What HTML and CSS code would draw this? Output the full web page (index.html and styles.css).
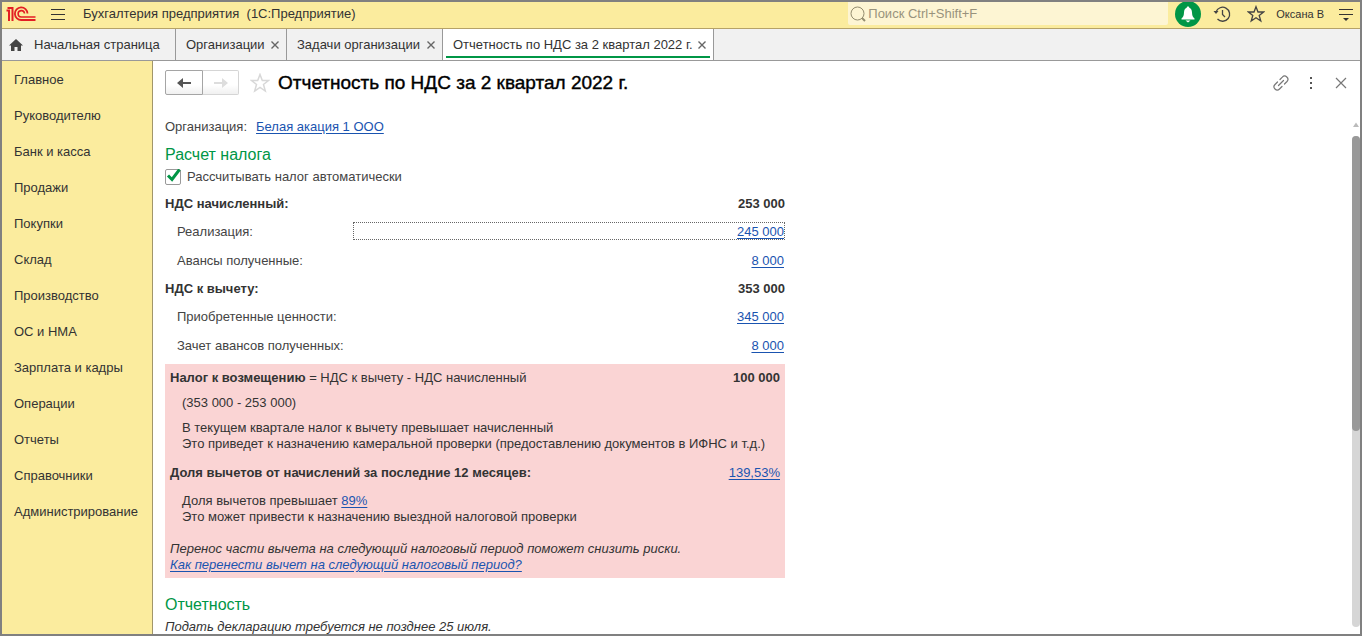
FILE: index.html
```html
<!DOCTYPE html>
<html lang="ru">
<head>
<meta charset="utf-8">
<title>Бухгалтерия предприятия (1С:Предприятие)</title>
<link rel="stylesheet" href="styles.css">
</head>
<body class="app">
<header class="topbar">
  <svg class="logo" width="30" height="16" viewBox="0 0 30 16" fill="none" stroke="#e31e24" stroke-width="2" aria-label="1С" role="img">
    <path d="M0.500 4.500H3V15"/>
    <path d="M1.500 2H6.500V15"/>
    <path d="M21.500 7.500A6.300 6.300 0 1 0 15.500 14H29.500" stroke-width="1.800"/>
    <path d="M18.500 7.500A3.200 3.200 0 1 0 15.500 11H29.500" stroke-width="1.600"/>
  </svg>
  <button class="icon-button menu-button" aria-label="Меню">
    <svg width="16" height="14" viewBox="0 0 16 14" stroke="#333" stroke-width="1"><path d="M1 2.500H15M1 7.500H15M1 12.500H15"/></svg>
  </button>
  <span class="app-title">Бухгалтерия предприятия&nbsp; (1С:Предприятие)</span>
  <label class="search">
    <svg width="17" height="16" viewBox="0 0 17 16" fill="none" stroke="#948d70"><circle cx="7.500" cy="7.500" r="6.500"/><path d="M12 12L15 15" stroke-width="2"/></svg>
    <input class="search-input" type="text" placeholder="Поиск Ctrl+Shift+F" aria-label="Поиск">
  </label>
  <div class="top-tools">
    <button class="icon-button bell" aria-label="Уведомления">
      <svg width="26" height="26" viewBox="0 0 26 26"><circle cx="13" cy="13" r="13" fill="#009646"/><path d="M13 5.500C13.800 5.500 14.300 6 14.300 6.700C16.300 7.300 16.800 9 17 11.500C17.200 14.500 17.500 15.500 19.500 17.500V18.500H6.500V17.500C8.500 15.500 8.800 14.500 9 11.500C9.200 9 9.700 7.300 11.700 6.700C11.700 6 12.200 5.500 13 5.500ZM10.500 19.500H15.500L13 21.500Z" fill="#fff"/></svg>
    </button>
    <button class="icon-button" aria-label="История">
      <svg width="18" height="18" viewBox="0 0 18 18" fill="none" stroke="#444" stroke-width="1.300"><path d="M3 7A7 7 0 1 1 4.500 14M9.500 5V9.500L12 12"/><path d="M0.500 6H5.500L3 9Z" fill="#444" stroke="none"/></svg>
    </button>
    <button class="icon-button" aria-label="Избранное">
      <svg width="18" height="18" viewBox="0 0 18 18" fill="none" stroke="#444" stroke-width="1.300"><path d="M9 1.700L11 7H16.500L12.200 10.400L13.800 16L9 12.800L4.200 16L5.800 10.400L1.500 7H7Z"/></svg>
    </button>
    <a class="user" href="#">Оксана В</a>
    <button class="icon-button" aria-label="Настройки">
      <svg width="16" height="14" viewBox="0 0 16 14" stroke="#333"><path d="M1 2.500H15M1 7.500H15"/><path d="M5 11H11L8 14Z" fill="#333" stroke="none"/></svg>
    </button>
  </div>
</header>

<nav class="tabs" aria-label="Открытые окна">
  <div class="tab tab-home">
    <svg width="16" height="14" viewBox="0 0 16 14" fill="#444"><path d="M8 1L15 7.500H13V13H9.500V9H6.500V13H3V7.500H1Z"/></svg>
    <a href="#">Начальная страница</a>
  </div>
  <div class="tab tab-orgs"><a href="#">Организации</a><button class="tab-close" aria-label="Закрыть"><svg width="8" height="8" viewBox="0 0 8 8"><path d="M0.500 0.500L7.500 7.500M7.500 0.500L0.500 7.500"/></svg></button></div>
  <div class="tab tab-tasks"><a href="#">Задачи организации</a><button class="tab-close" aria-label="Закрыть"><svg width="8" height="8" viewBox="0 0 8 8"><path d="M0.500 0.500L7.500 7.500M7.500 0.500L0.500 7.500"/></svg></button></div>
  <div class="tab tab-active"><a href="#">Отчетность по НДС за 2 квартал 2022 г.</a><button class="tab-close" aria-label="Закрыть"><svg width="8" height="8" viewBox="0 0 8 8"><path d="M0.500 0.500L7.500 7.500M7.500 0.500L0.500 7.500"/></svg></button></div>
</nav>

<div class="workspace">
  <nav class="sections" aria-label="Разделы">
    <a href="#">Главное</a>
    <a href="#">Руководителю</a>
    <a href="#">Банк и касса</a>
    <a href="#">Продажи</a>
    <a href="#">Покупки</a>
    <a href="#">Склад</a>
    <a href="#">Производство</a>
    <a href="#">ОС и НМА</a>
    <a href="#">Зарплата и кадры</a>
    <a href="#">Операции</a>
    <a href="#">Отчеты</a>
    <a href="#">Справочники</a>
    <a href="#">Администрирование</a>
  </nav>

  <main class="form">
    <div class="form-head">
      <div class="history">
        <button class="history-back" aria-label="Назад"><svg width="14" height="10" viewBox="0 0 14 10" fill="#555"><path d="M0 5L6 0V4H14V6H6V10Z"/></svg></button>
        <button class="history-next" aria-label="Вперед" disabled><svg width="14" height="10" viewBox="0 0 14 10" fill="#ddd"><path d="M14 5L8 0V4H0V6H8V10Z"/></svg></button>
      </div>
      <button class="icon-button star" aria-label="В избранное">
        <svg width="20" height="20" viewBox="0 0 20 20" fill="none" stroke="#d8d8d8" stroke-width="1.500"><path d="M10 1.500L12.300 7.500H18.500L13.500 11.500L15.300 18L10 14.300L4.700 18L6.500 11.500L1.500 7.500H7.700Z"/></svg>
      </button>
      <h1 class="form-title">Отчетность по НДС за 2 квартал 2022 г.</h1>
      <div class="form-tools">
        <button class="icon-button" aria-label="Ссылка">
          <svg width="16" height="16" viewBox="0 0 16 16" fill="none" stroke="#777" stroke-width="1.200" stroke-linecap="round"><path d="M5.500 10.500L10.500 5.500M7 4.500L9.300 2.200A2.900 2.900 0 0 1 14 6.500L11.500 9M4.500 7L2 9.500A2.900 2.900 0 0 0 6.500 14L9 11.500"/></svg>
        </button>
        <button class="icon-button" aria-label="Еще">
          <svg width="16" height="16" viewBox="0 0 16 16" fill="#555"><path d="M7 2H9V4H7ZM7 7H9V9H7ZM7 12H9V14H7Z"/></svg>
        </button>
        <button class="icon-button" aria-label="Закрыть форму">
          <svg width="16" height="16" viewBox="0 0 16 16" stroke="#777" stroke-width="1.200"><path d="M3 3L13 13M13 3L3 13"/></svg>
        </button>
      </div>
    </div>

    <div class="form-body">
      <div class="report">
        <p class="organization"><span>Организация:</span><a class="link" href="#">Белая акация 1 ООО</a></p>
        <h2 class="group-title">Расчет налога</h2>
        <label class="auto">
          <span class="tick">
            <input type="checkbox" checked>
            <svg width="16" height="16" viewBox="0 0 16 16" fill="none" stroke="#009646" stroke-width="3"><path d="M3 6.500L7 10.500L14.500 0.500"/></svg>
          </span>
          Рассчитывать налог автоматически
        </label>

        <section class="group">
          <div class="row total"><span>НДС начисленный:</span><span>253 000</span></div>
          <div class="row sub"><span>Реализация:</span><a class="link value focused" href="#">245 000</a></div>
          <div class="row sub"><span>Авансы полученные:</span><a class="link value" href="#">8 000</a></div>
        </section>
        <section class="group">
          <div class="row total"><span>НДС к вычету:</span><span>353 000</span></div>
          <div class="row sub"><span>Приобретенные ценности:</span><a class="link value" href="#">345 000</a></div>
          <div class="row sub"><span>Зачет авансов полученных:</span><a class="link value" href="#">8 000</a></div>
        </section>

        <section class="warning">
          <div class="warning-row"><span><b>Налог к возмещению</b> = НДС к вычету - НДС начисленный</span><b>100 000</b></div>
          <p class="warning-formula">(353 000 - 253 000)</p>
          <p class="warning-text">В текущем квартале налог к вычету превышает начисленный<br>Это приведет к назначению камеральной проверки (предоставлению документов в ИФНС и т.д.)</p>
          <div class="warning-row"><b>Доля вычетов от начислений за последние 12 месяцев:</b><a class="link" href="#">139,53%</a></div>
          <p class="warning-text">Доля вычетов превышает <a class="link" href="#">89%</a><br>Это может привести к назначению выездной налоговой проверки</p>
          <p class="advice">Перенос части вычета на следующий налоговый период поможет снизить риски.<br><a class="link" href="#">Как перенести вычет на следующий налоговый период?</a></p>
        </section>

        <h2 class="group-title reporting">Отчетность</h2>
        <p class="deadline">Подать декларацию требуется не позднее 25 июля.</p>
      </div>
      <div class="scroll" aria-hidden="true">
        <svg width="8" height="5" viewBox="0 0 8 5" fill="#bbb"><path d="M1 5L4 0.500L7 5Z"/></svg>
        <div class="scroll-track"><div class="scroll-thumb"></div></div>
      </div>
    </div>
  </main>
</div>
</body>
</html>
```

FILE: styles.css
```css
* {
  box-sizing: border-box;
}

.app {
  display: flex;
  flex-direction: column;
  height: 100vh;
  margin: 0;
  overflow: hidden;
  border: 2px solid #808080;
  background: #fff;
  color: #333;
  font: 13px/16px "Liberation Sans", Arial, sans-serif;
}

button,
input {
  margin: 0;
  font: inherit;
}

a {
  color: inherit;
  text-decoration: none;
}

p,
h1,
h2 {
  margin: 0;
}

svg {
  display: block;
  flex: none;
}

.link {
  color: #1a54b0;
  text-decoration: underline;
  text-underline-offset: 2px;
}

.icon-button {
  display: flex;
  align-items: center;
  justify-content: center;
  padding: 0;
  border: 0;
  background: none;
}

/* Top bar */

.topbar {
  display: flex;
  flex: none;
  align-items: center;
  height: 27px;
  padding: 0 6px 3px 4px;
  border-bottom: 1px solid #b5a268;
  background: #fbec9e;
}

.menu-button {
  margin-left: 14px;
}

.app-title {
  margin-left: 17px;
  white-space: nowrap;
}

.search {
  display: flex;
  align-items: center;
  align-self: stretch;
  width: 320px;
  margin-left: auto;
  padding-left: 2px;
  border-radius: 0 0 2px 2px;
  background: #fdf5d3;
}

.search-input {
  flex: 1;
  min-width: 0;
  padding: 0 1px;
  border: 0;
  outline: 0;
  background: none;
}

.search-input::placeholder {
  color: #98937d;
  opacity: 1;
}

.top-tools {
  display: flex;
  align-items: center;
  margin-left: 7px;
}

.top-tools .icon-button {
  margin-right: 16px;
}

.top-tools .bell {
  height: 22px;
  margin-right: 12px;
}

.top-tools .icon-button:last-child {
  margin: 0 0 0 14px;
}

.user {
  margin-left: -5px;
  font-size: 11px;
}

/* Window tabs */

.tabs {
  display: flex;
  flex: none;
  height: 32px;
  border-bottom: 1px solid #999;
  background: #f1f1f1;
}

.tab {
  display: flex;
  align-items: center;
  justify-content: space-between;
  padding: 1px 7px 0 10px;
  border-right: 1px solid #999;
  white-space: nowrap;
}

.tab-home {
  justify-content: flex-start;
  gap: 10px;
  width: 174px;
  padding-left: 6px;
}

.tab-orgs {
  width: 111px;
}

.tab-tasks {
  width: 156px;
}

.tab-active {
  width: 271px;
  background: linear-gradient(#009646, #009646) center bottom 2px / calc(100% - 6px) 2px no-repeat #fff;
}

.tab-close {
  padding: 0;
  border: 0;
  background: none;
}

.tab-close path {
  stroke: #666;
  stroke-width: 1.4;
}

/* Sections panel */

.workspace {
  display: flex;
  flex: 1;
  min-height: 0;
}

.sections {
  flex: none;
  width: 151px;
  padding-top: 1px;
  border-right: 1px solid #a1966a;
  background: #fbec9e;
}

.sections a {
  display: block;
  padding: 0 12px;
  line-height: 36px;
  white-space: nowrap;
}

/* Form */

.form {
  display: flex;
  flex: 1;
  flex-direction: column;
  min-width: 0;
  padding-left: 12px;
}

.form-head {
  display: flex;
  flex: none;
  align-items: center;
  height: 43px;
  padding-right: 11px;
}

.history {
  display: flex;
}

.history button {
  display: flex;
  align-items: center;
  justify-content: center;
  height: 25px;
  padding: 0;
  background: linear-gradient(#fff 60%, #f0f0f0);
}

.history .history-back {
  width: 38px;
  border: 1px solid #a5a5a5;
  border-radius: 2px 0 0 2px;
}

.history .history-next {
  width: 36px;
  border: 1px solid #d5d5d5;
  border-left: 0;
  border-radius: 0 2px 2px 0;
}

.star {
  margin: 0 8px 0 11px;
}

.form-title {
  color: #000;
  font-size: 19px;
  font-weight: 400;
  line-height: 22px;
  -webkit-text-stroke: 0.4px #000;
}

.form-tools {
  display: flex;
  gap: 14px;
  margin-left: auto;
}

.form-body {
  display: flex;
  flex: 1;
  justify-content: space-between;
  min-height: 0;
}

.report {
  width: 620px;
  padding-top: 15px;
  color: #444;
}

.organization {
  display: flex;
  gap: 9px;
}

.group-title {
  margin-top: 10px;
  color: #009646;
  font-size: 16px;
  font-weight: 400;
  line-height: 20px;
}

.auto {
  display: flex;
  align-items: center;
  gap: 6px;
  height: 24px;
}

.tick {
  display: grid;
}

.tick > * {
  grid-area: 1 / 1;
}

.tick input {
  appearance: none;
  width: 16px;
  height: 16px;
  border: 1px solid #999;
  border-radius: 2px;
}

.tick svg {
  pointer-events: none;
}

.group {
  color: #333;
}

.row {
  display: grid;
  grid-template-columns: 188px 1fr;
  align-items: center;
  height: 28px;
}

.row span {
  padding-top: 2px;
}

.total {
  font-weight: 700;
}

.total span:last-child {
  text-align: right;
}

.sub {
  color: #444;
}

.sub span {
  padding-left: 12px;
}

.sub + .sub {
  margin-top: 1px;
}

.value {
  padding: 2px 0 0;
  border: 1px solid transparent;
  line-height: 14px;
  text-align: right;
}

.focused {
  border: 1px dotted #666;
}

/* Risk notice */

.warning {
  margin-top: 5px;
  padding: 6px 5px 5px;
  background: #fad4d4;
  color: #333;
}

.warning-row {
  display: flex;
  justify-content: space-between;
}

.warning-formula {
  margin: 9px 12px;
}

.warning-text {
  margin: 9px 12px 13px;
  white-space: nowrap;
}

.warning-text + .advice {
  margin-top: 16px;
}

.warning-row + .warning-text {
  margin-top: 12px;
}

.advice {
  font-style: italic;
}

.reporting {
  margin-top: 17px;
}

.deadline {
  margin-top: 4px;
  color: #333;
  font-style: italic;
}

/* Scroll bar */

.scroll {
  display: flex;
  flex: none;
  flex-direction: column;
  gap: 9px;
  width: 8px;
  padding: 18px 0 7px;
}

.scroll-track {
  flex: 1;
  border-radius: 4px;
  background: #d6d6d6;
}

.scroll-thumb {
  height: 60%;
  border-radius: 4px;
  background: #999;
}
```
